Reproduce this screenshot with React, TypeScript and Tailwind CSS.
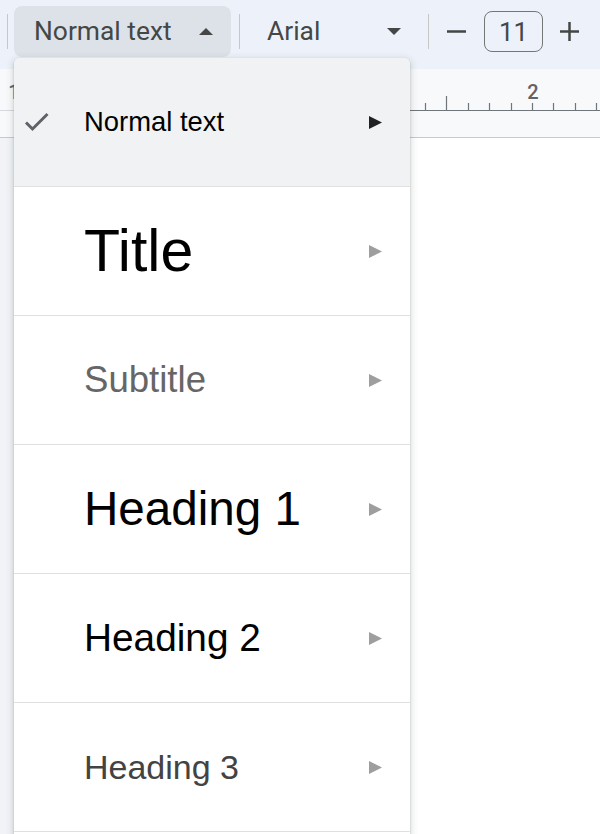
import React from "react";

const items = [
  { label: "Normal text", size: "text-[27.4px]", color: "text-[#000000]", selected: true },
  { label: "Title", size: "text-[59px]", color: "text-[#000000]", selected: false },
  { label: "Subtitle", size: "text-[36.6px]", color: "text-[#666666]", selected: false },
  { label: "Heading 1", size: "text-[47.6px]", color: "text-[#000000]", selected: false },
  { label: "Heading 2", size: "text-[38.8px]", color: "text-[#000000]", selected: false },
  { label: "Heading 3", size: "text-[34px]", color: "text-[#434343]", selected: false },
];

function Check() {
  return (
    <svg width="26" height="22" viewBox="0 0 26 22" className="block">
      <polyline
        points="2,11.5 8.5,18 23.5,3"
        fill="none"
        stroke="#5f6368"
        strokeWidth="3"
        strokeLinecap="butt"
        strokeLinejoin="miter"
      />
    </svg>
  );
}

function Arrow({ color }: { color: string }) {
  return (
    <svg width="13" height="13" viewBox="0 0 13 13" className="block">
      <polygon points="0,0 13,6.5 0,13" fill={color} />
    </svg>
  );
}

function Ruler() {
  const ticks: { x: number; tall: boolean }[] = [];
  for (let k = -5; k <= 3; k++) {
    const x = 532 + 21.4 * k;
    ticks.push({ x, tall: k === -4 });
  }
  return (
    <svg width="600" height="68" viewBox="0 0 600 68" className="block">
      <line x1="0" y1="41.5" x2="14" y2="41.5" stroke="#d5d8dc" strokeWidth="1" />
      <line x1="14" y1="41.5" x2="600" y2="41.5" stroke="#70757a" strokeWidth="1.2" />
      {ticks.map((t, i) => (
        <line
          key={i}
          x1={Math.round(t.x) + 0.5}
          x2={Math.round(t.x) + 0.5}
          y1={t.tall ? 27 : 34}
          y2="41"
          stroke="#70757a"
          strokeWidth="1.2"
        />
      ))}
      <text
        x="533"
        y="30"
        textAnchor="middle"
        fontFamily="Roboto, 'Liberation Sans', sans-serif"
        fontWeight="500"
        fontSize="20"
        fill="#5f6368"
      >
        2
      </text>
      <text
        x="14"
        y="30"
        textAnchor="middle"
        fontFamily="Roboto, 'Liberation Sans', sans-serif"
        fontWeight="500"
        fontSize="20"
        fill="#5f6368"
      >
        1
      </text>
    </svg>
  );
}

export default function App() {
  return (
    <div className="relative w-[600px] h-[834px] overflow-hidden bg-white font-['Roboto','Liberation_Sans',sans-serif]">
      {/* Toolbar */}
      <div className="h-[69px] pb-[6px] bg-[#edf2fa] flex items-center">
        <div className="ml-[7px] w-px h-[35px] bg-[#c7c7c7]" />
        <div className="ml-[6px] w-[217px] h-[51px] rounded-[8px] bg-[#dde2e8] flex items-center justify-between pl-[20px] pr-[18px]">
          <span className="text-[26.4px] leading-none text-[#444746]">Normal text</span>
          <svg width="14" height="7" viewBox="0 0 14 7" className="block">
            <polygon points="0,7 7,0 14,7" fill="#444746" />
          </svg>
        </div>
        <div className="ml-[8px] w-px h-[35px] bg-[#c7c7c7]" />
        <div className="ml-[27px] w-[120px] flex items-center">
          <span className="text-[26.4px] leading-none text-[#444746]">Arial</span>
        </div>
        <svg width="14" height="7" viewBox="0 0 14 7" className="block">
          <polygon points="0,0 14,0 7,7" fill="#444746" />
        </svg>
        <div className="ml-[27px] w-px h-[35px] bg-[#c7c7c7]" />
        <svg width="19" height="19" viewBox="0 0 19 19" className="block ml-[18px]">
          <rect x="0" y="8.25" width="19" height="2.5" fill="#444746" />
        </svg>
        <div className="ml-[18px] w-[59px] h-[41px] rounded-[8px] border-[1.5px] border-[#747775] flex items-center justify-center">
          <span className="text-[26px] leading-none text-[#444746]">11</span>
        </div>
        <svg width="19" height="19" viewBox="0 0 19 19" className="block ml-[17px]">
          <rect x="0" y="8.25" width="19" height="2.5" fill="#444746" />
          <rect x="8.25" y="0" width="2.5" height="19" fill="#444746" />
        </svg>
      </div>

      {/* Ruler */}
      <div className="h-[69px] bg-[#f8f9fb] border-b border-[#c7c9cc]">
        <Ruler />
      </div>

      {/* Page area */}
      <div className="flex h-[696px]">
        <div className="w-[14px] bg-[#f1f3f6]" />
        <div className="flex-1 bg-white" />
      </div>

      {/* Dropdown menu */}
      <div className="absolute left-[14px] top-[58px] w-[396px] bg-white rounded-t-[6px] shadow-[0_2px_6px_2px_rgba(60,64,67,0.15),0_1px_2px_0_rgba(60,64,67,0.3)] font-['Liberation_Sans',Arial,sans-serif]">
        {items.map((it) => (
          <div
            key={it.label}
            className={`h-[129px] border-b border-[#e0e0e0] flex items-center ${
              it.selected ? "bg-[#f1f2f4] rounded-t-[6px]" : "bg-white"
            }`}
          >
            <div className="w-[70px] pl-[10px] flex items-center">
              {it.selected ? <Check /> : null}
            </div>
            <div className={`flex-1 leading-none whitespace-nowrap ${it.size} ${it.color}`}>
              {it.label}
            </div>
            <div className="mr-[28px]">
              <Arrow color={it.selected ? "#202124" : "#9e9e9e"} />
            </div>
          </div>
        ))}
        <div className="h-[40px] bg-white" />
      </div>
    </div>
  );
}
